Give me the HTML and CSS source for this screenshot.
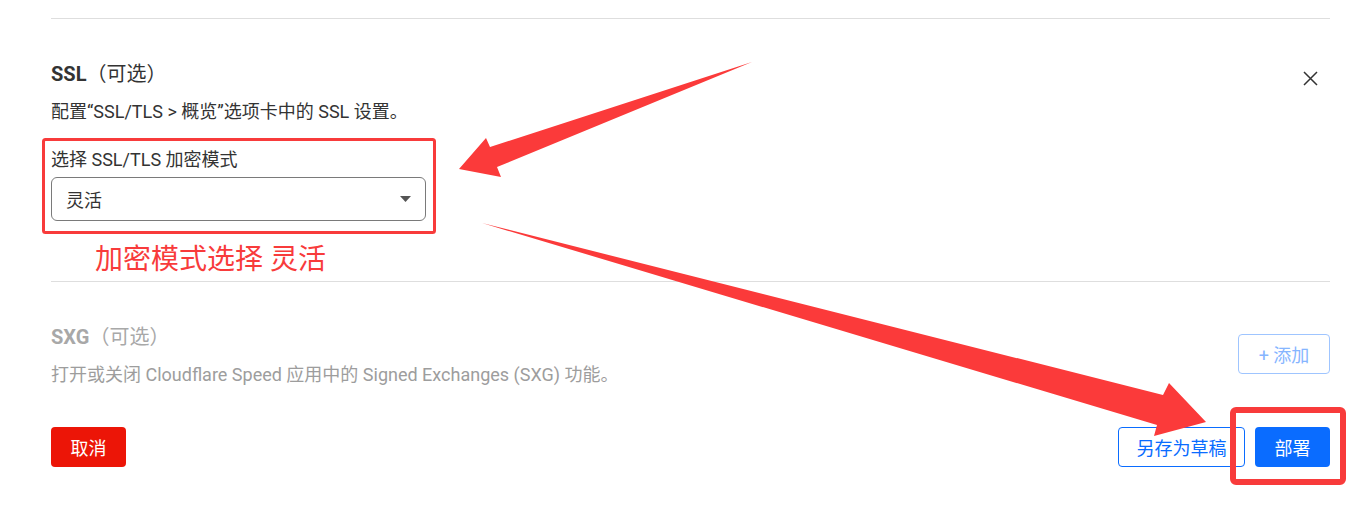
FILE: index.html
```html
<!DOCTYPE html>
<html lang="zh-CN">
<head>
  <meta charset="UTF-8" />
  <title>SSL 设置</title>
  <meta name="viewport" content="width=device-width, initial-scale=1" />
  <link rel="stylesheet" href="styles.css">
</head>
<body>
  <div class="page">
    <div class="rule"></div>

    <section class="setting">
      <div class="setting-head">
        <h2 class="setting-title"><b>SSL</b>（可选）</h2>
        <button class="close" type="button" aria-label="关闭">
          <svg width="15" height="15" viewBox="0 0 15 15">
            <path d="M1 1 L14 14 M14 1 L1 14" stroke="#333" stroke-width="1.5" fill="none" />
          </svg>
        </button>
      </div>
      <p class="setting-desc">配置“SSL/TLS &gt; 概览”选项卡中的 SSL 设置。</p>

      <div class="field">
        <label class="field-label">选择 SSL/TLS 加密模式</label>
        <div class="select">
          <span>灵活</span>
          <svg width="11" height="6" viewBox="0 0 11 6">
            <path d="M0 0 H11 L5.5 6 Z" fill="#555" />
          </svg>
        </div>
      </div>
      <div class="note">加密模式选择 灵活</div>
    </section>

    <div class="rule"></div>

    <section class="setting setting-off">
      <div class="setting-row">
        <div>
          <h2 class="setting-title"><b>SXG</b>（可选）</h2>
          <p class="setting-desc">打开或关闭 Cloudflare Speed 应用中的 Signed Exchanges (SXG) 功能。</p>
        </div>
        <button class="btn btn-add" type="button">+ 添加</button>
      </div>
    </section>

    <div class="actions">
      <button class="btn btn-cancel" type="button">取消</button>
      <div class="actions-right">
        <button class="btn btn-outline" type="button">另存为草稿</button>
        <button class="btn btn-primary" type="button">部署</button>
      </div>
    </div>
  </div>

  <svg class="marks" width="1371" height="520" viewBox="0 0 1371 520">
    <rect x="43.5" y="139.5" width="391" height="93" rx="2" fill="none" stroke="#f83b3b" stroke-width="3" />
    <rect x="1233" y="410" width="110" height="72" rx="3" fill="none" stroke="#f83b3b" stroke-width="6" />
    <polygon points="752,62 490,147 486,138 459,169 501,177 497,167" fill="#fb3a3a" />
    <polygon points="482,223 1163,395 1169,383 1206,422 1154,436 1157,425" fill="#fb3a3a" />
  </svg>
</body>
</html>
```

FILE: styles.css
```css
* {
  box-sizing: border-box;
}

body {
  margin: 0;
  background: #fff;
  font-family: Roboto, "Noto Sans CJK SC", sans-serif;
  color: #333;
  position: relative;
  width: 1371px;
  height: 520px;
  overflow: hidden;
}

.page {
  padding: 18px 41px 0 51px;
}

.rule {
  height: 1px;
  background: #dedede;
}

.setting {
  padding-top: 43px;
}

.setting-head {
  display: flex;
  justify-content: space-between;
  align-items: flex-start;
}

.setting-title {
  margin: 0;
  font-size: 20px;
  line-height: 24px;
  font-weight: normal;
  color: #333;
}

.setting-title b {
  font-weight: 700;
}

.close {
  width: 15px;
  height: 15px;
  margin: 9px 12px 0 0;
  padding: 0;
  border: none;
  background: none;
  cursor: pointer;
  display: flex;
}

.setting-desc {
  margin: 14px 0 0;
  font-size: 18px;
  line-height: 24px;
  color: #333;
}

.field {
  margin-top: 25px;
  width: 375px;
}

.field-label {
  display: block;
  font-size: 18px;
  line-height: 22px;
}

.select {
  margin-top: 6px;
  height: 44px;
  border: 1px solid #7a7a7a;
  border-radius: 6px;
  padding: 0 14px;
  display: flex;
  align-items: center;
  justify-content: space-between;
  font-size: 18px;
}

.note {
  margin: 21px 0 3px 44px;
  font-size: 28px;
  line-height: 36px;
  color: #f83b3b;
}

.setting-off .setting-title,
.setting-off .setting-title b {
  color: #a8a8a8;
}

.setting-off .setting-desc {
  color: #9d9d9d;
}

.setting-row {
  display: flex;
  justify-content: space-between;
  align-items: flex-start;
}

.btn {
  height: 40px;
  padding: 0;
  border-radius: 4px;
  font-family: inherit;
  font-size: 18px;
  cursor: pointer;
}

.btn-add {
  width: 92px;
  margin-top: 9px;
  background: #fff;
  border: 1px solid #9fc5ff;
  color: #86b5ff;
}

.actions {
  margin-top: 40px;
  display: flex;
  justify-content: space-between;
}

.actions-right {
  display: flex;
  gap: 10px;
}

.btn-cancel {
  width: 75px;
  background: #ec1507;
  border: none;
  color: #fff;
}

.btn-outline {
  width: 127px;
  background: #fff;
  border: 1px solid #0a6cff;
  color: #0a6cff;
}

.btn-primary {
  width: 75px;
  background: #0a6cff;
  border: none;
  color: #fff;
}

.marks {
  position: absolute;
  top: 0;
  left: 0;
  pointer-events: none;
}
```
